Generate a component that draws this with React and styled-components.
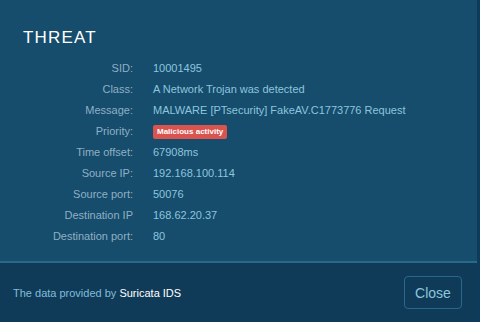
import React from "react";
import styled, { createGlobalStyle } from "styled-components";

const Global = createGlobalStyle`
  html, body { margin: 0; padding: 0; background: #0e3a5c; }
  body { font-family: "Liberation Sans", Arial, sans-serif; }
`;

const Modal = styled.div`
  width: 477px;
  height: 322px;
  background: #164c6c;
  display: flex;
  flex-direction: column;
`;

const Body = styled.div`
  flex: 1;
  padding: 29px 0 0 23px;
`;

const Title = styled.h1`
  margin: 0 0 11px 0;
  font-size: 17px;
  font-weight: 400;
  letter-spacing: 1.2px;
  color: #ffffff;
  line-height: 18px;
`;

const Grid = styled.div`
  display: grid;
  grid-template-columns: 110px 1fr;
  column-gap: 20px;
  font-size: 11px;
`;

const Label = styled.div`
  text-align: right;
  color: #8fb0c4;
  height: 21px;
  line-height: 21px;
  white-space: nowrap;
`;

const Value = styled.div`
  color: #8cc6de;
  height: 21px;
  line-height: 21px;
  white-space: nowrap;
  display: flex;
  align-items: center;
`;

const Badge = styled.span`
  background: #d9534f;
  color: #fff;
  font-size: 8px;
  font-weight: 700;
  padding: 0 4px;
  height: 14px;
  line-height: 14px;
  border-radius: 2px;
`;

const Footer = styled.div`
  height: 59px;
  border-top: 2px solid #2a6a88;
  background: #103b58;
  display: flex;
  align-items: center;
  justify-content: space-between;
  padding: 0 15px 0 13px;
`;

const Note = styled.div`
  font-size: 11px;
  color: #80bdd8;
`;

const Strong = styled.span`
  color: #ffffff;
`;

const CloseBtn = styled.button`
  width: 58px;
  height: 33px;
  background: transparent;
  border: 1px solid #27698a;
  border-radius: 4px;
  color: #8cc6de;
  font-family: inherit;
  font-size: 14px;
  padding: 0;
`;

const rows = [
  ["SID:", "10001495"],
  ["Class:", "A Network Trojan was detected"],
  ["Message:", "MALWARE [PTsecurity] FakeAV.C1773776 Request"],
  ["Priority:", null],
  ["Time offset:", "67908ms"],
  ["Source IP:", "192.168.100.114"],
  ["Source port:", "50076"],
  ["Destination IP", "168.62.20.37"],
  ["Destination port:", "80"],
];

export default function App() {
  return (
    <>
      <Global />
      <Modal>
        <Body>
          <Title>THREAT</Title>
          <Grid>
            {rows.map(([l, v]) => (
              <React.Fragment key={l}>
                <Label>{l}</Label>
                <Value>{v === null ? <Badge>Malicious activity</Badge> : v}</Value>
              </React.Fragment>
            ))}
          </Grid>
        </Body>
        <Footer>
          <Note>
            The data provided by <Strong>Suricata IDS</Strong>
          </Note>
          <CloseBtn>Close</CloseBtn>
        </Footer>
      </Modal>
    </>
  );
}
